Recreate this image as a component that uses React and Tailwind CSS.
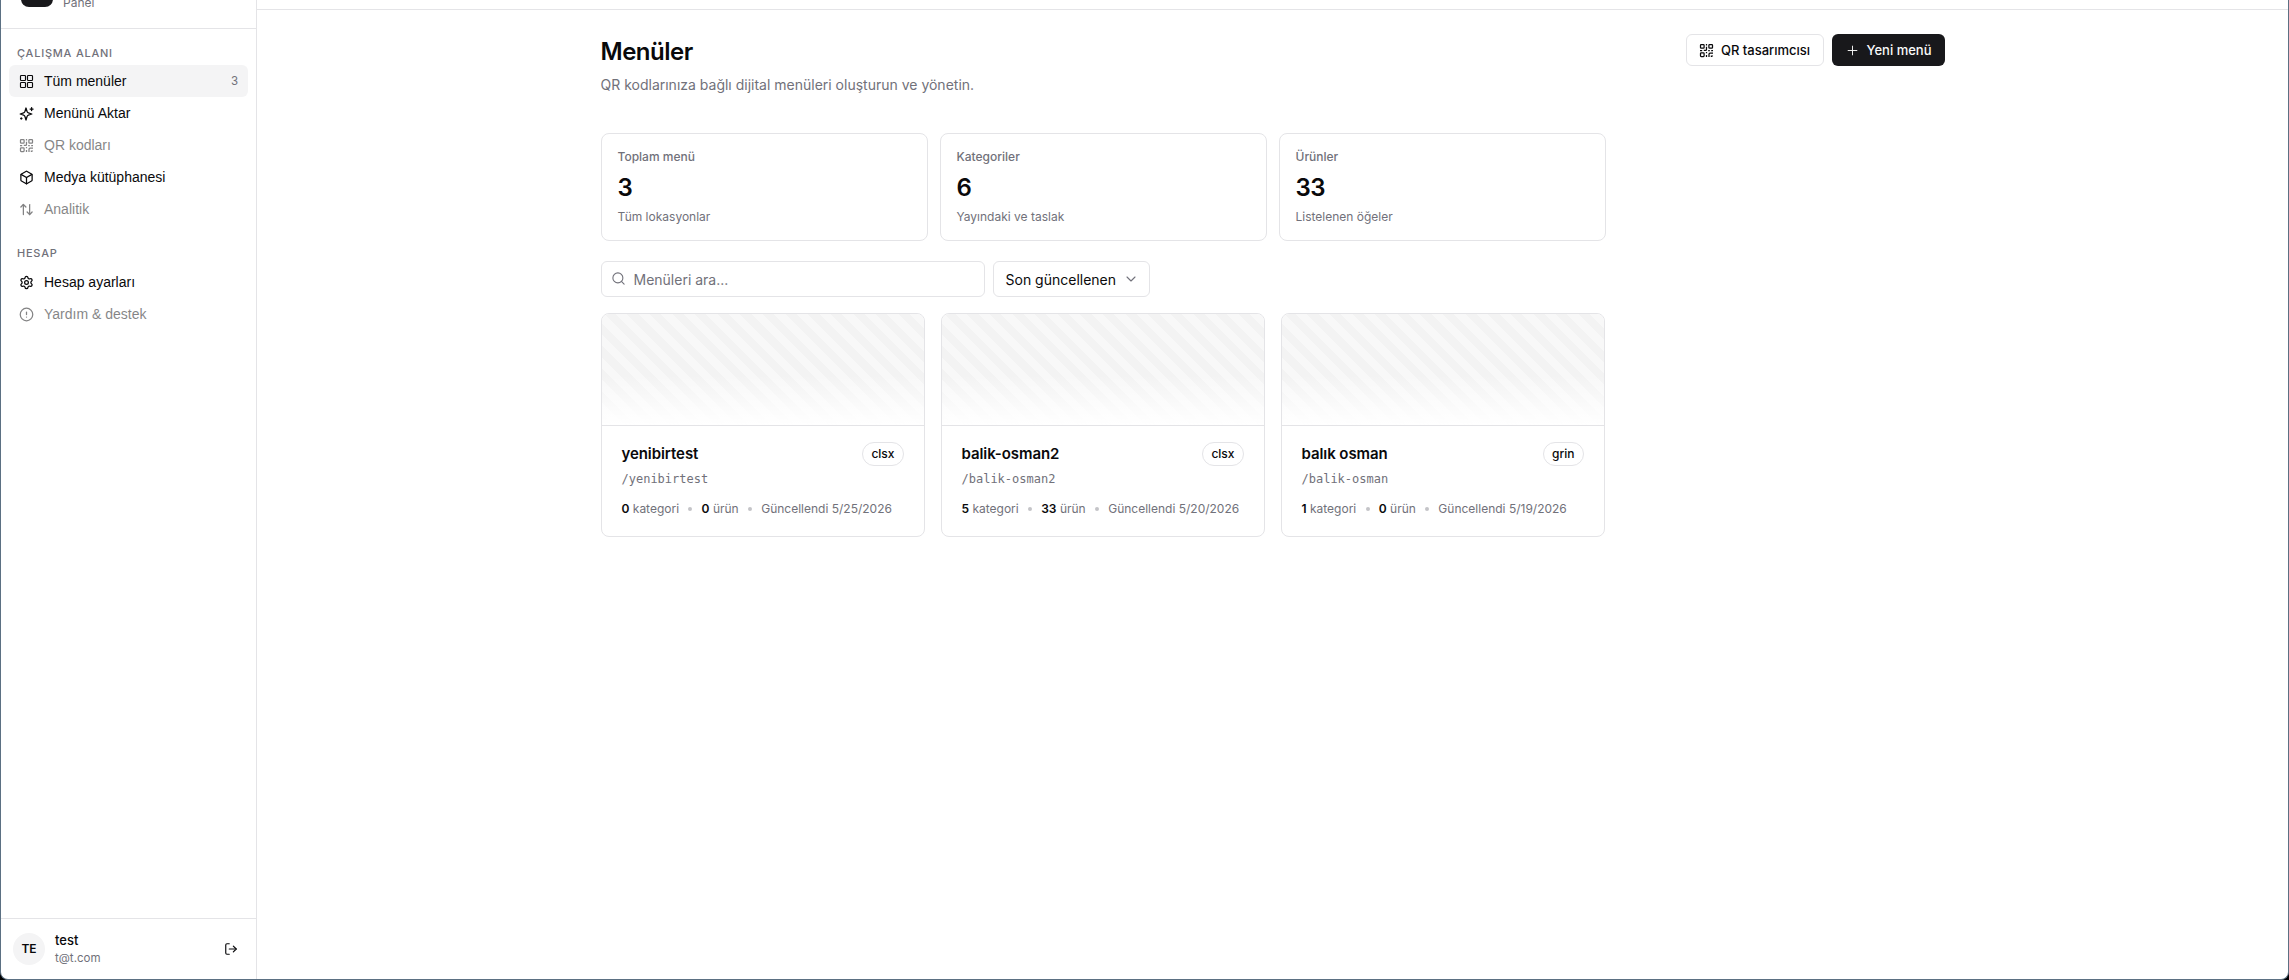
import { Box, ArrowUpDown, Settings, CircleAlert, LogOut, Plus, Search, ChevronDown } from 'lucide-react';

const workspaceItems = [
  { label: 'Tüm menüler', icon: GridIcon, active: true, count: 3 },
  { label: 'Menünü Aktar', icon: SparkleIcon },
  { label: 'QR kodları', icon: QrIcon, disabled: true },
  { label: 'Medya kütüphanesi', icon: Box },
  { label: 'Analitik', icon: ArrowUpDown, disabled: true },
];

const accountItems = [
  { label: 'Hesap ayarları', icon: Settings },
  { label: 'Yardım & destek', icon: CircleAlert, disabled: true },
];

const stats = [
  { label: 'Toplam menü', value: 3, hint: 'Tüm lokasyonlar' },
  { label: 'Kategoriler', value: 6, hint: 'Yayındaki ve taslak' },
  { label: 'Ürünler', value: 33, hint: 'Listelenen öğeler' },
];

const menus = [
  { name: 'yenibirtest', slug: '/yenibirtest', theme: 'clsx', categories: 0, products: 0, updated: '5/25/2026' },
  { name: 'balik-osman2', slug: '/balik-osman2', theme: 'clsx', categories: 5, products: 33, updated: '5/20/2026' },
  { name: 'balık osman', slug: '/balik-osman', theme: 'grin', categories: 1, products: 0, updated: '5/19/2026' },
];

function App() {
  return (
    <div className="h-screen bg-black">
      <div className="flex h-full overflow-hidden rounded-b-lg border-x border-b border-[#5b7083] bg-white font-['Inter',sans-serif] text-[#09090b]">
        <Sidebar />
        <main className="flex min-w-0 flex-1 flex-col">
          <div className="h-2.5 shrink-0 border-b border-[#e4e4e7]" />
          <div className="mx-auto w-[1344px] pt-6">
            <PageHeader />
            <div className="mt-[37px] grid w-[1005px] grid-cols-3 gap-3">
              {stats.map((stat) => (
                <StatCard key={stat.label} stat={stat} />
              ))}
            </div>
            <Toolbar />
            <div className="mt-4 grid w-[1004px] grid-cols-3 gap-4">
              {menus.map((menu) => (
                <MenuCard key={menu.slug} menu={menu} />
              ))}
            </div>
          </div>
        </main>
      </div>
    </div>
  );
}

function Sidebar() {
  return (
    <aside className="flex w-64 shrink-0 flex-col border-r border-[#e4e4e7]">
      <div className="flex h-[29px] shrink-0 items-end gap-2.5 border-b border-[#e4e4e7] pb-[17px] pl-5">
        <div className="mb-1 h-8 w-8 shrink-0 rounded-lg bg-[#18181b]" />
        <span className="text-xs leading-4 text-[#71717a]">Panel</span>
      </div>
      <nav className="flex-1 px-2">
        <NavGroup title="ÇALIŞMA ALANI" items={workspaceItems} className="pt-4" />
        <NavGroup title="HESAP" items={accountItems} className="pt-5 [&>ul]:pt-px" />
      </nav>
      <div className="flex h-[61px] shrink-0 items-center gap-2.5 border-t border-[#e4e4e7] pr-[18px] pl-3">
        <div className="flex h-8 w-8 items-center justify-center rounded-full bg-[#f4f4f5] text-xs font-semibold">
          TE
        </div>
        <div className="flex-1">
          <p className="text-[13px] leading-[17px] font-medium">test</p>
          <p className="text-[11.5px] leading-[18px] text-[#71717a]">t@t.com</p>
        </div>
        <LogOut className="h-3.5 w-3.5" strokeWidth={2} />
      </div>
    </aside>
  );
}

function NavGroup({ title, items, className }) {
  return (
    <div className={className}>
      <h2 className="px-2 pb-1 text-[11px] leading-4 font-medium tracking-[0.07em] text-[#71717a]">{title}</h2>
      <ul>
        {items.map(({ label, icon: Icon, active, count, disabled }) => (
          <li
            key={label}
            className={`flex h-8 items-center gap-2.5 rounded-md px-2.5 font-['Liberation_Sans',sans-serif] text-sm ${
              active ? 'bg-[#f4f4f5]' : ''
            } ${disabled ? 'opacity-50' : ''}`}
          >
            <Icon className="h-[15px] w-[15px]" strokeWidth={2} />
            <span className="flex-1">{label}</span>
            {count && <span className="text-xs text-[#71717a]">{count}</span>}
          </li>
        ))}
      </ul>
    </div>
  );
}

function PageHeader() {
  return (
    <header className="flex items-start justify-between">
      <div>
        <h1 className="text-2xl leading-9 font-semibold tracking-[-0.02em]">Menüler</h1>
        <p className="mt-1 text-sm leading-[22px] text-[#71717a]">
          QR kodlarınıza bağlı dijital menüleri oluşturun ve yönetin.
        </p>
      </div>
      <div className="flex gap-2">
        <button className="flex h-8 w-[138px] items-center justify-center gap-[7px] rounded-md border border-[#e4e4e7] pt-px text-[13px] font-medium">
          <QrIcon className="h-[15px] w-[15px]" />
          QR tasarımcısı
        </button>
        <button className="flex h-8 w-[113px] items-center justify-center gap-[7px] rounded-md bg-[#18181b] pt-px text-[13px] font-medium text-[#fafafa]">
          <Plus className="h-[15px] w-[15px]" strokeWidth={1.5} />
          Yeni menü
        </button>
      </div>
    </header>
  );
}

function StatCard({ stat }) {
  return (
    <div className="h-[108px] rounded-lg border border-[#e4e4e7] px-4 pt-[15px]">
      <p className="text-xs leading-4 font-medium text-[#71717a]">{stat.label}</p>
      <p className="mt-[5px] text-2xl leading-9 font-semibold tracking-[-0.02em]">{stat.value}</p>
      <p className="mt-[3px] text-xs leading-4 text-[#71717a]">{stat.hint}</p>
    </div>
  );
}

function Toolbar() {
  return (
    <div className="mt-5 flex gap-2 text-sm">
      <div className="flex h-9 w-96 items-center gap-2 rounded-md border border-[#e4e4e7] px-[9px] pt-px text-[#71717a]">
        <Search className="-mt-0.5 h-[15px] w-[15px]" strokeWidth={1.75} />
        Menüleri ara...
      </div>
      <button className="flex h-9 w-[157px] items-center justify-between rounded-md border border-[#e4e4e7] pt-px pr-2.5 pl-3">
        Son güncellenen
        <ChevronDown className="-mt-0.5 h-4 w-4 text-[#71717a]" strokeWidth={1.6} />
      </button>
    </div>
  );
}

function MenuCard({ menu }) {
  return (
    <article className="h-56 overflow-hidden rounded-lg border border-[#e4e4e7]">
      <div className="h-28 border-b border-[#e4e4e7] bg-[linear-gradient(to_bottom,transparent_55%,white),repeating-linear-gradient(45deg,#f3f3f3_0_8px,#f8f8f8_8px_16px)]" />
      <div className="px-5 pt-4">
        <div className="flex h-6 items-center justify-between">
          <h3 className="text-[15px] font-semibold tracking-[-0.005em]">{menu.name}</h3>
          <span className="flex h-6 items-center rounded-full border border-[#e4e4e7] px-2 text-xs font-medium">
            {menu.theme}
          </span>
        </div>
        <p className="mt-1 font-['DejaVu_Sans_Mono',monospace] text-xs leading-[18px] text-[#71717a]">{menu.slug}</p>
        <div className="mt-3 flex items-center gap-[9.25px] text-xs leading-[18px] text-[#71717a]">
          <span>
            <b className="font-semibold text-[#09090b]">{menu.categories}</b> kategori
          </span>
          <Dot />
          <span>
            <b className="font-semibold text-[#09090b]">{menu.products}</b> ürün
          </span>
          <Dot />
          <span>Güncellendi {menu.updated}</span>
        </div>
      </div>
    </article>
  );
}

function Dot() {
  return <span className="h-1 w-1 rounded-full bg-[#c4c4c8]" />;
}

function GridIcon({ className }) {
  return (
    <svg className={className} viewBox="0 0 15 15" fill="none" stroke="currentColor" strokeWidth="1.15">
      <rect x="1.5" y="1.5" width="5" height="5" rx="0.8" />
      <rect x="8.5" y="1.5" width="5" height="5" rx="0.8" />
      <rect x="1.5" y="8.5" width="5" height="5" rx="0.8" />
      <rect x="8.5" y="8.5" width="5" height="5" rx="0.8" />
    </svg>
  );
}

function SparkleIcon({ className }) {
  return (
    <svg
      className={className}
      viewBox="0 0 15 15"
      fill="none"
      stroke="currentColor"
      strokeWidth="1.3"
      strokeLinecap="round"
      strokeLinejoin="round"
    >
      <path d="M7 2 8.1 5.6a2 2 0 0 0 1.3 1.3L12.8 8 9.4 9.1a2 2 0 0 0-1.3 1.3L7 14 5.9 10.4a2 2 0 0 0-1.3-1.3L1.2 8l3.4-1.1a2 2 0 0 0 1.3-1.3Z" />
      <path d="M12.6 1.6v3M11.1 3.1h3M2.3 11.9v1.2M1.7 12.5h1.2" />
    </svg>
  );
}

function QrIcon({ className }) {
  return (
    <svg className={className} viewBox="0 0 15 15" fill="none" stroke="currentColor" strokeWidth="1.25">
      <rect x="1.5" y="1.5" width="3.6" height="3.6" rx="0.7" />
      <rect x="9.9" y="1.5" width="3.6" height="3.6" rx="0.7" />
      <rect x="1.5" y="9.9" width="3.6" height="3.6" rx="0.7" />
      <path d="M7.5 1v1.4M7.5 3.8v2.6a1 1 0 0 1-1 1H4.8M1 7.5h2.2M7.5 9v1.2M7.5 12v2M9.2 7.5h1.6M12.2 7.5H14M14 10.2h-3a1 1 0 0 0-1 1V14M12.4 12.4v1.6M13.4 12.4v1" />
    </svg>
  );
}

export default App;
